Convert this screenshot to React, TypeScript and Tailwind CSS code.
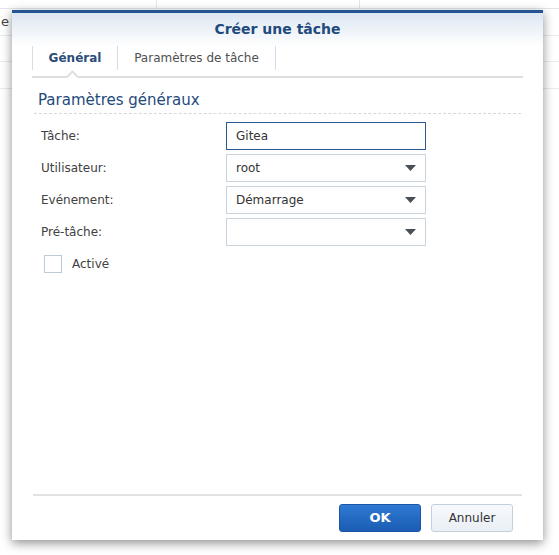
import React from "react";

const font = { fontFamily: '"DejaVu Sans", Verdana, sans-serif' };

function Caret() {
  return (
    <svg width="11" height="6" viewBox="0 0 11 6" className="shrink-0">
      <path d="M0 0 H11 L5.5 6 Z" fill="#4a4f57" />
    </svg>
  );
}

type FieldProps = {
  label: string;
  value?: string;
  select?: boolean;
  focused?: boolean;
};

function Field({ label, value = "", select = false, focused = false }: FieldProps) {
  return (
    <div className="flex h-[28px] items-center">
      <div className="w-[192px] pl-[7px] text-[12px] text-[#414141]">{label}</div>
      <div
        className={
          "flex h-[28px] w-[200px] items-center justify-between border pl-[9px] pr-[9px] text-[12px] text-[#333] bg-white " +
          (focused ? "border-[#2b5a8e]" : "border-[#c9d3de]")
        }
      >
        <span>{value}</span>
        {select && <Caret />}
      </div>
    </div>
  );
}

export default function App() {
  return (
    <div className="relative h-[555px] w-[559px] overflow-hidden bg-white" style={font}>
      {/* page behind the dialog */}
      <div className="flex h-[9px] border-b border-[#e3e7ec]">
        <div className="w-[157px] border-r border-[#e3e7ec]" />
        <div className="w-[203px] border-r border-[#e3e7ec]" />
        <div className="flex-1" />
      </div>
      <div className="flex h-[27px] items-center border-b border-[#e8ebef] text-[13px] text-[#444]">
        <span className="pl-[1px]">e</span>
      </div>
      <div className="h-[26px] border-b border-[#e8ebef]" />
      <div className="h-[27px] border-b border-[#e8ebef]" />

      {/* dialog */}
      <div className="absolute left-[12px] top-[10px] flex h-[530px] w-[531px] flex-col bg-white shadow-[0_3px_10px_rgba(0,0,0,0.45)]">
        <div className="h-[3px] bg-[#245493]" />
        <div className="flex h-[33px] items-center justify-center bg-[linear-gradient(180deg,#dce6f1,#ffffff)] text-[14px] font-bold text-[#1f4a7c]">
          Créer une tâche
        </div>

        {/* tabs */}
        <div className="relative mx-[20px] flex border-b-2 border-[#dedede] pb-[6px]">
          <div className="flex h-[24px] w-[86px] items-center justify-center border-x border-[#d3dde8] text-[12px] font-bold text-[#2a4d7a]">
            Général
          </div>
          <div className="flex h-[24px] w-[158px] items-center justify-center border-r border-[#d3dde8] text-[12px] text-[#505050]">
            Paramètres de tâche
          </div>
          <div className="absolute left-[36px] top-[26px] h-[9px] w-[9px] rotate-45 border-l-2 border-t-2 border-[#dedede] bg-white" />
        </div>

        {/* body */}
        <div className="flex flex-1 flex-col px-[22px]">
          <div className="mt-[10px] border-b border-dashed border-[#d4d8dd] pb-[1px] pl-[4px] text-[15px] leading-[24px] text-[#1f4a7c]">
            Paramètres généraux
          </div>
          <div className="mt-[8px] flex flex-col gap-[4px]">
            <Field label="Tâche:" value="Gitea" focused />
            <Field label="Utilisateur:" value="root" select />
            <Field label="Evénement:" value="Démarrage" select />
            <Field label="Pré-tâche:" select />
          </div>
          <div className="mt-[9px] flex items-center gap-[10px] pl-[10px]">
            <div className="h-[18px] w-[18px] border border-[#bccadb] bg-white" />
            <span className="text-[12px] text-[#414141]">Activé</span>
          </div>
        </div>

        {/* footer */}
        <div className="mx-[21px] flex justify-end gap-[10px] border-t-2 border-[#e2e2e2] pb-[8px] pr-[9px] pt-[8px]">
          <button className="h-[28px] w-[82px] rounded-[3px] border border-[#1a55a6] bg-[linear-gradient(180deg,#2f7ad3,#1b5cb3)] text-[13px] font-bold text-white">
            OK
          </button>
          <button className="h-[28px] w-[82px] rounded-[3px] border border-[#c3cfdb] bg-[linear-gradient(180deg,#f7f9fc,#e9eff6)] text-[12px] text-[#333]">
            Annuler
          </button>
        </div>
      </div>
    </div>
  );
}
